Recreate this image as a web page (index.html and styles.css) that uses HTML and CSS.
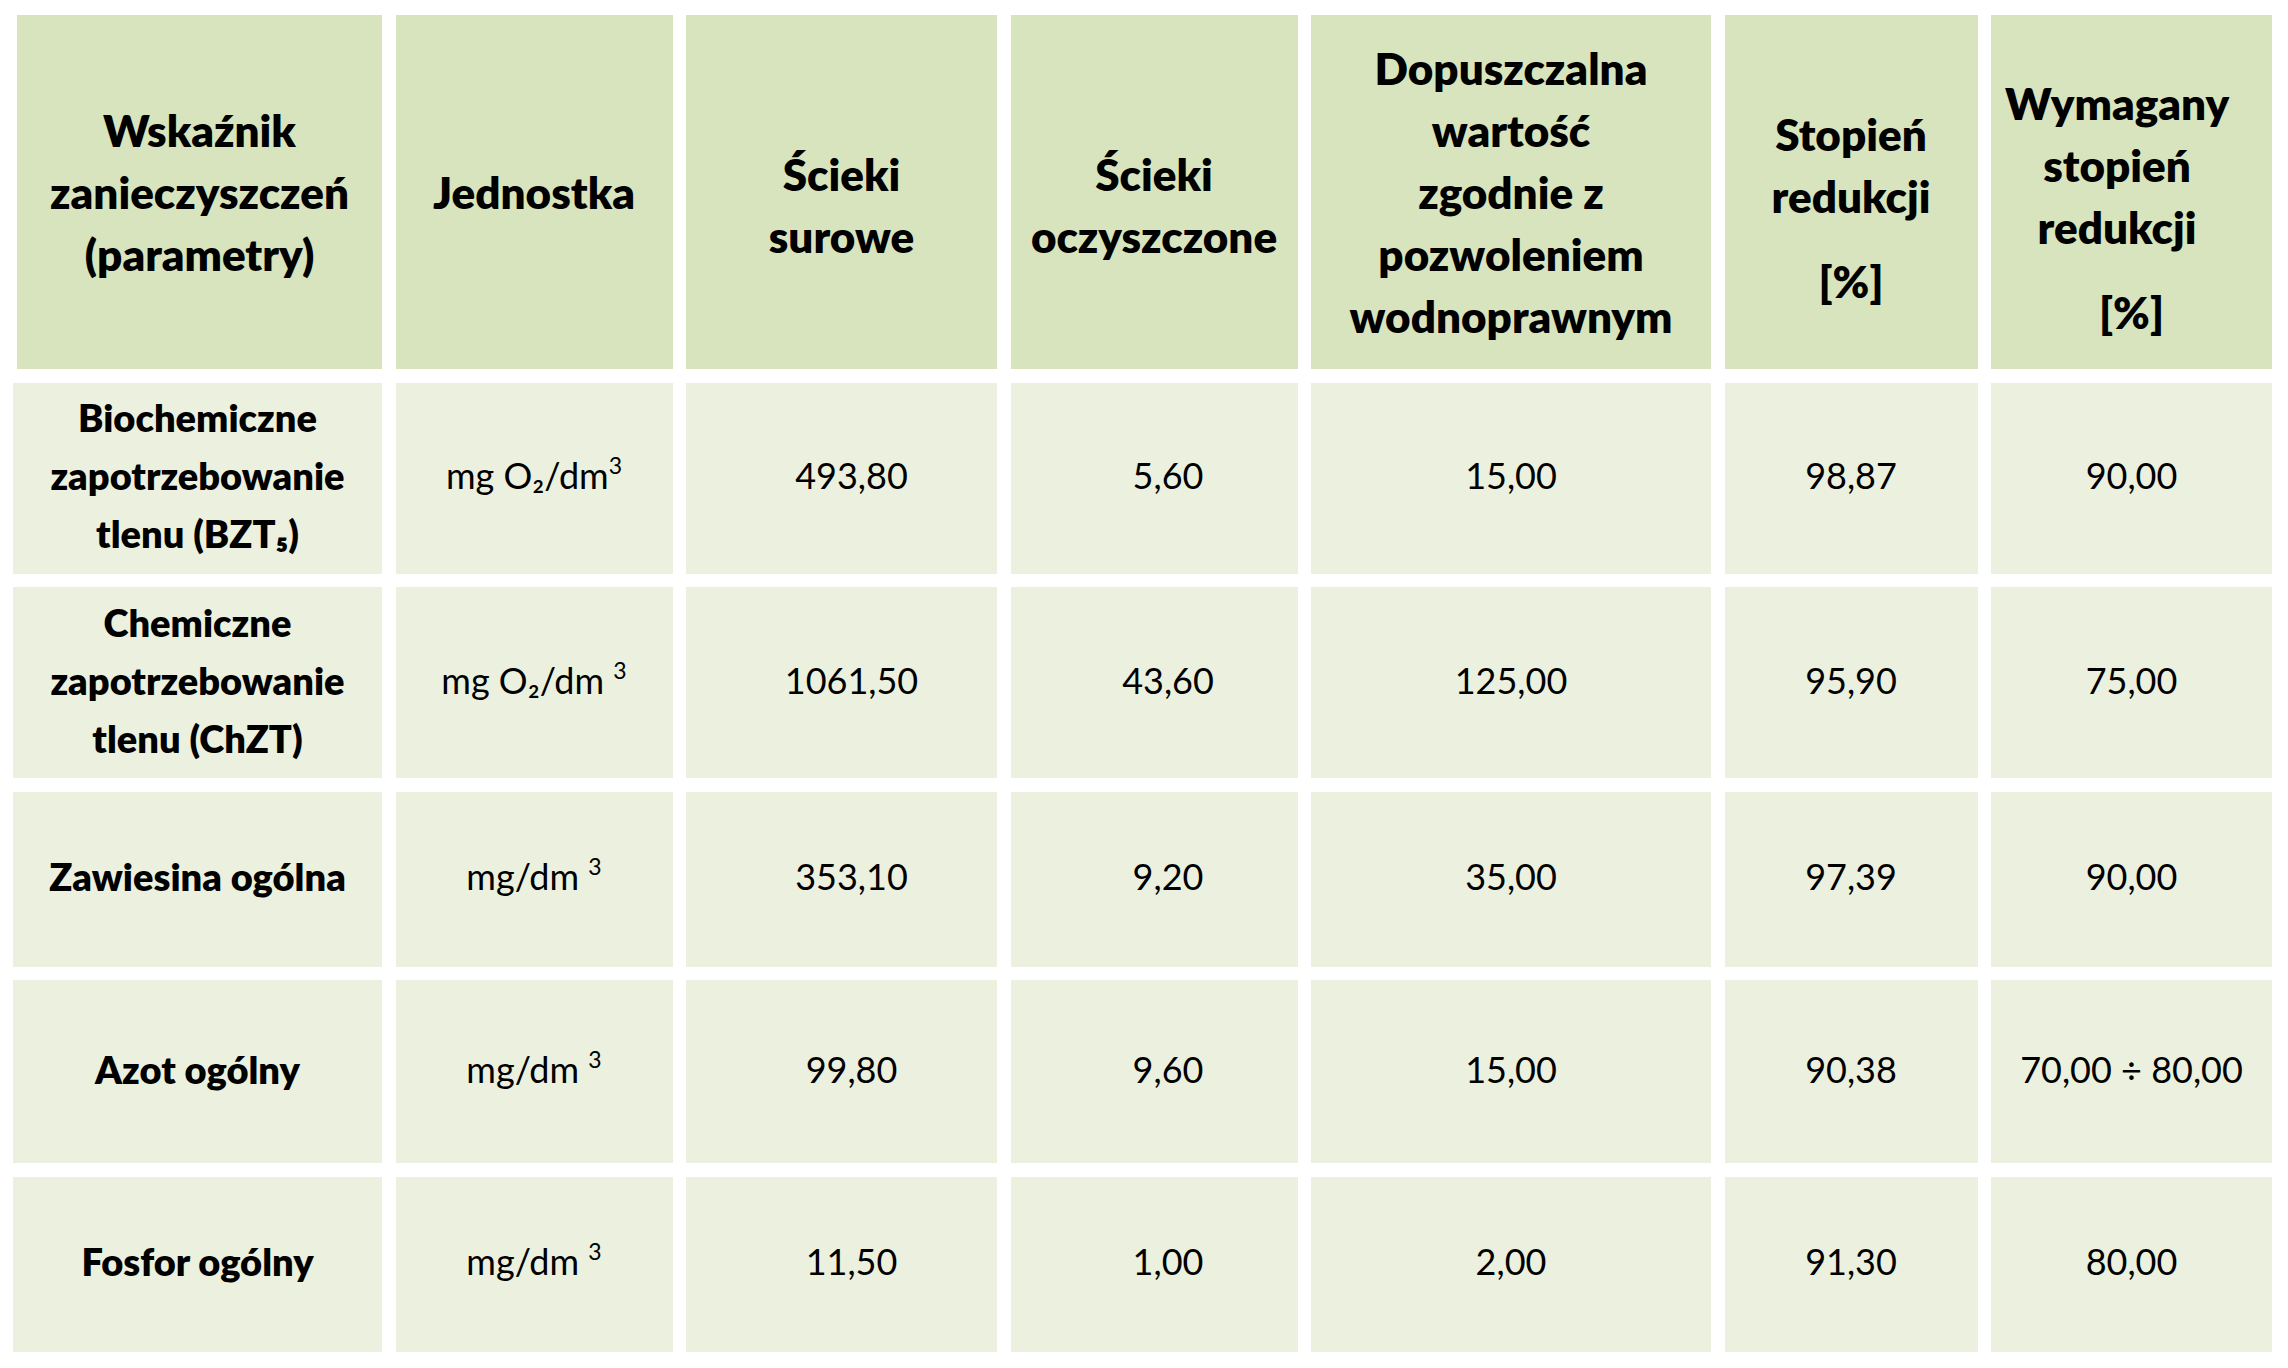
FILE: index.html
```html
<!DOCTYPE html>
<html lang="pl">
<head>
<meta charset="utf-8">
<title>Tabela</title>
<link rel="stylesheet" href="styles.css">
</head>
<body>
<div class="page">
  <div class="grid">
    <div class="cell head"><span>Wskaźnik<br>zanieczyszczeń<br>(parametry)</span></div>
    <div class="cell head"><span>Jednostka</span></div>
    <div class="cell head low"><span>Ścieki<br>surowe</span></div>
    <div class="cell head low"><span>Ścieki<br>oczyszczone</span></div>
    <div class="cell head"><span>Dopuszczalna<br>wartość<br>zgodnie z<br>pozwoleniem<br>wodnoprawnym</span></div>
    <div class="cell head pct"><span>Stopień<br>redukcji</span><span class="unit">[%]</span></div>
    <div class="cell head pct"><span class="shift">Wymagany<br>stopień<br>redukcji</span><span class="unit">[%]</span></div>

    <div class="cell name"><span>Biochemiczne<br>zapotrzebowanie<br>tlenu (BZT₅)</span></div>
    <div class="cell val"><span>mg O₂/dm<sup class="sup">3</sup></span></div>
    <div class="cell val c3"><span>493,80</span></div>
    <div class="cell val c4"><span>5,60</span></div>
    <div class="cell val"><span>15,00</span></div>
    <div class="cell val"><span>98,87</span></div>
    <div class="cell val"><span>90,00</span></div>

    <div class="cell name"><span>Chemiczne<br>zapotrzebowanie<br>tlenu (ChZT)</span></div>
    <div class="cell val"><span>mg O₂/dm <sup class="sup">3</sup></span></div>
    <div class="cell val c3"><span>1061,50</span></div>
    <div class="cell val c4"><span>43,60</span></div>
    <div class="cell val"><span>125,00</span></div>
    <div class="cell val"><span>95,90</span></div>
    <div class="cell val"><span>75,00</span></div>

    <div class="cell name"><span>Zawiesina ogólna</span></div>
    <div class="cell val"><span>mg/dm <sup class="sup">3</sup></span></div>
    <div class="cell val c3"><span>353,10</span></div>
    <div class="cell val c4"><span>9,20</span></div>
    <div class="cell val"><span>35,00</span></div>
    <div class="cell val"><span>97,39</span></div>
    <div class="cell val"><span>90,00</span></div>

    <div class="cell name"><span>Azot ogólny</span></div>
    <div class="cell val"><span>mg/dm <sup class="sup">3</sup></span></div>
    <div class="cell val c3"><span>99,80</span></div>
    <div class="cell val c4"><span>9,60</span></div>
    <div class="cell val"><span>15,00</span></div>
    <div class="cell val"><span>90,38</span></div>
    <div class="cell val"><span>70,00 ÷ 80,00</span></div>

    <div class="cell name"><span>Fosfor ogólny</span></div>
    <div class="cell val"><span>mg/dm <sup class="sup">3</sup></span></div>
    <div class="cell val c3"><span>11,50</span></div>
    <div class="cell val c4"><span>1,00</span></div>
    <div class="cell val"><span>2,00</span></div>
    <div class="cell val"><span>91,30</span></div>
    <div class="cell val"><span>80,00</span></div>
  </div>
</div>
</body>
</html>
```
FILE: styles.css
```css
html, body {
  margin: 0;
  padding: 0;
  background: #ffffff;
}

.page {
  width: 2288px;
  height: 1368px;
  box-sizing: border-box;
  padding: 15px 0 0 17px;
  font-family: Lato, "Liberation Sans", sans-serif;
  color: #000000;
}

.grid {
  display: grid;
  grid-template-columns: 365px 277px 311px 287px 400px 253px 281px;
  grid-template-rows: 354px 191px 191px 175px 183px 175px;
  column-gap: 13.5px;
  row-gap: 13.5px;
}

.cell {
  display: flex;
  flex-direction: column;
  align-items: center;
  justify-content: center;
  text-align: center;
  white-space: nowrap;
  box-sizing: border-box;
  background: #ebf1de;
}

.head {
  background: #d7e4bd;
  font-weight: 800;
  font-size: 44px;
  line-height: 62px;
}

.head.low {
  padding-top: 26px;
}

.head.pct {
  padding-top: 30px;
}

.head .unit {
  display: block;
  margin-top: 23px;
}

.head .shift {
  display: block;
  padding-right: 29px;
}

.name {
  font-weight: 800;
  font-size: 38px;
  line-height: 58px;
  margin-left: -4px;
  padding-bottom: 6px;
}

.val {
  font-weight: 400;
  font-size: 36px;
  line-height: 58px;
  padding-bottom: 6px;
}

.c3 {
  padding-left: 20px;
}

.c4 {
  padding-left: 28px;
}

.sup {
  font-size: 23px;
  line-height: 0;
  vertical-align: 15px;
}
```
